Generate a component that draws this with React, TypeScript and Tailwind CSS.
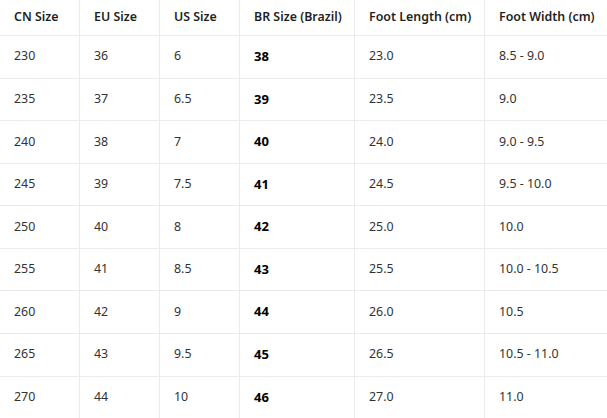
import React from "react";

const rows = [
  ["230", "36", "6", "38", "23.0", "8.5 - 9.0"],
  ["235", "37", "6.5", "39", "23.5", "9.0"],
  ["240", "38", "7", "40", "24.0", "9.0 - 9.5"],
  ["245", "39", "7.5", "41", "24.5", "9.5 - 10.0"],
  ["250", "40", "8", "42", "25.0", "10.0"],
  ["255", "41", "8.5", "43", "25.5", "10.0 - 10.5"],
  ["260", "42", "9", "44", "26.0", "10.5"],
  ["265", "43", "9.5", "45", "26.5", "10.5 - 11.0"],
  ["270", "44", "10", "46", "27.0", "11.0"],
];

const headers = ["CN Size", "EU Size", "US Size", "BR Size (Brazil)", "Foot Length (cm)", "Foot Width (cm)"];

export default function App() {
  return (
    <div
      className="w-[607px] h-[418px] overflow-hidden bg-white text-[12.4px]"
      style={{ fontFamily: '"Segoe UI", "Noto Sans", "Open Sans", sans-serif' }}
    >
      <div className="grid grid-cols-[80px_80px_80px_115px_130px_1fr] border-b border-[#ebebeb]">
        {headers.map((h, i) => (
          <div
            key={h}
            className={`h-[35px] flex items-center pl-[14px] pb-[1px] font-semibold text-[#1f1f1f] whitespace-nowrap ${i < 5 ? "border-r border-[#ebebeb]" : ""}`}
          >
            {h}
          </div>
        ))}
      </div>
      {rows.map((r) => (
        <div
          key={r[0]}
          className="grid grid-cols-[80px_80px_80px_115px_130px_1fr] h-[42.57px] border-b border-[#ebebeb]"
        >
          {r.map((c, i) => (
            <div
              key={i}
              className={`flex items-center pl-[14px] whitespace-nowrap ${i < 5 ? "border-r border-[#ebebeb]" : ""} ${i === 3 ? "font-bold text-black text-[13px]" : "text-[#333333]"}`}
            >
              {c}
            </div>
          ))}
        </div>
      ))}
    </div>
  );
}
